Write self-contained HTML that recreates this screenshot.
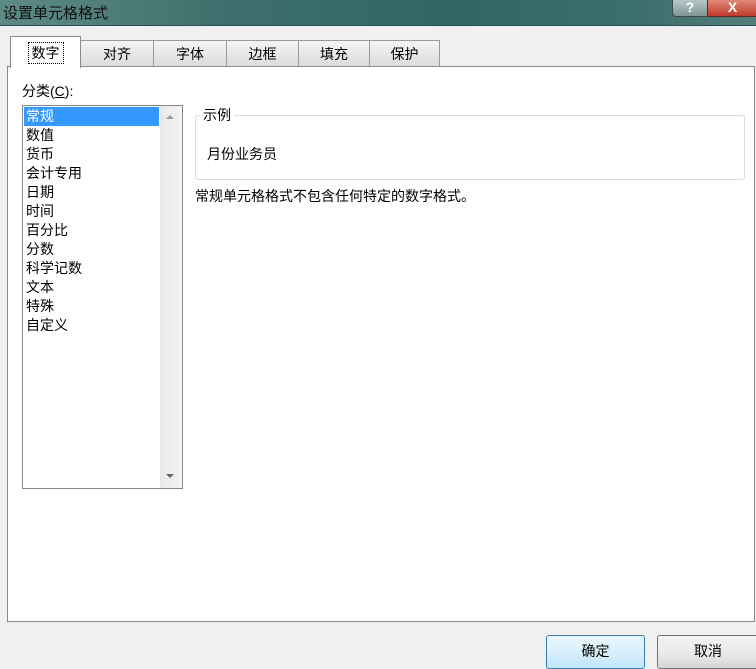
<!DOCTYPE html>
<html><head><meta charset="utf-8"><style>
body{margin:0;width:756px;height:666px;overflow:hidden;background:#f0f0f0;font-family:"Liberation Sans","Noto Sans CJK SC",sans-serif;font-size:14px;color:#000;position:relative}
.a{position:absolute}
#title{left:0;top:0;width:756px;height:25px;background:linear-gradient(90deg,#5e8a86 0%,#3f6f6c 30%,#2f6664 60%,#3d6f6c 85%,#557e7b 100%);border-bottom:1px solid #26504e}
#title span{position:absolute;left:3px;top:2px;font-size:15px;color:#111}
.tab{top:40px;height:26px;background:linear-gradient(#f4f4f4,#dcdcdc);border:1px solid #9a9a9a;border-bottom:none;text-align:center;line-height:26px;box-sizing:border-box}
#panel{left:7px;top:66px;width:748px;height:556px;background:#fff;border:1px solid #8a8a8a;box-sizing:border-box}
.item{left:26px;height:19px;line-height:19px}
</style></head><body>
<div id="title" class="a"><span>设置单元格格式</span></div>
<div class="a" style="left:672px;top:0;width:34px;height:16px;background:linear-gradient(#b8c6c5,#7d9896);border:1px solid #3a4a4a;border-top:none;border-radius:0 0 0 4px;color:#fff;text-align:center;font-size:14px;line-height:14px;font-weight:bold">?</div>
<div class="a" style="left:707px;top:0;width:49px;height:16px;background:linear-gradient(#e08a7a,#c0392b);border:1px solid #5a2a22;border-top:none;color:#fff;text-align:center;font-size:14px;line-height:14px;font-weight:bold">X</div>
<div id="panel" class="a"></div>
<div class="a tab" style="left:80px;width:74px">对齐</div>
<div class="a tab" style="left:153px;width:74px">字体</div>
<div class="a tab" style="left:226px;width:73px">边框</div>
<div class="a tab" style="left:298px;width:72px">填充</div>
<div class="a tab" style="left:369px;width:71px">保护</div>
<div class="a tab" style="left:10px;top:36px;width:71px;height:32px;background:#fff;line-height:32px;border-color:#8a8a8a"><span style="border:1px dotted #000;padding:2px 3px">数字</span></div>
<div class="a" style="left:22px;top:81px">分类(<u>C</u>):</div>
<div class="a" style="left:22px;top:105px;width:161px;height:384px;border:1px solid #828790;box-sizing:border-box;background:#fff"></div>
<div class="a" style="left:160px;top:106px;width:22px;height:382px;background:linear-gradient(90deg,#e8e8e8,#f4f4f4)"></div>
<div class="a" style="left:166px;top:115px;width:0;height:0;border-left:4px solid transparent;border-right:4px solid transparent;border-bottom:4px solid #999"></div>
<div class="a" style="left:166px;top:474px;width:0;height:0;border-left:4px solid transparent;border-right:4px solid transparent;border-top:4px solid #666"></div>
<div class="a" style="left:24px;top:107px;width:135px;height:19px;background:#3399ff"></div>
<div class="a item" style="top:107px;color:#fff">常规</div>
<div class="a item" style="top:126px">数值</div>
<div class="a item" style="top:145px">货币</div>
<div class="a item" style="top:164px">会计专用</div>
<div class="a item" style="top:183px">日期</div>
<div class="a item" style="top:202px">时间</div>
<div class="a item" style="top:221px">百分比</div>
<div class="a item" style="top:240px">分数</div>
<div class="a item" style="top:259px">科学记数</div>
<div class="a item" style="top:278px">文本</div>
<div class="a item" style="top:297px">特殊</div>
<div class="a item" style="top:316px">自定义</div>
<div class="a" style="left:195px;top:115px;width:550px;height:65px;border:1px solid #dcdcdc;border-radius:3px;box-sizing:border-box"></div>
<div class="a" style="left:200px;top:105px;background:#fff;padding:0 3px">示例</div>
<div class="a" style="left:207px;top:144px">月份业务员</div>
<div class="a" style="left:195px;top:186px">常规单元格格式不包含任何特定的数字格式。</div>
<div class="a" style="left:546px;top:635px;width:99px;height:34px;border:1px solid #3c7fb1;border-radius:3px;box-sizing:border-box;background:linear-gradient(#eaf6fd,#d9f0fc 50%,#bee6fd);text-align:center;line-height:30px">确定</div>
<div class="a" style="left:657px;top:635px;width:102px;height:34px;border:1px solid #707070;border-radius:3px;box-sizing:border-box;background:linear-gradient(#f2f2f2,#ebebeb 50%,#d6d6d6);text-align:center;line-height:30px">取消</div>
</body></html>
